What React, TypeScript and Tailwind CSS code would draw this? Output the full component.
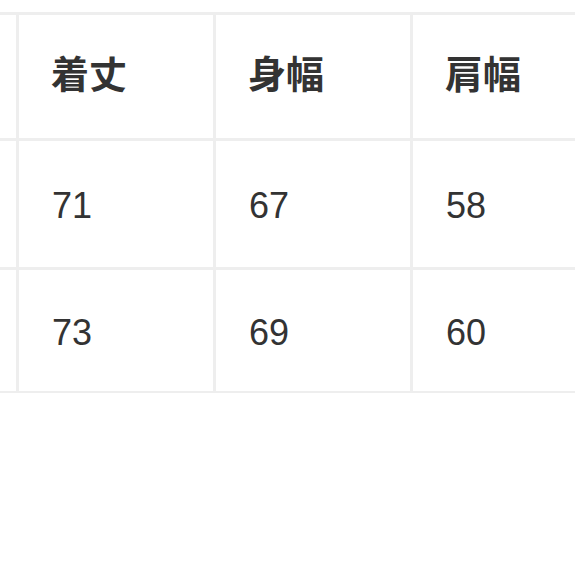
import React from 'react'

const headers = ['着丈', '身幅', '肩幅']
const rows = [
  ['71', '67', '58'],
  ['73', '69', '60'],
]

const Cell = ({ children, head }: { children?: React.ReactNode; head?: boolean }) => (
  <div
    className={
      head
        ? "bg-white flex items-center pl-[32px] pb-[9px] text-[38px] font-bold text-[#333333] font-['Noto_Sans_CJK_JP',sans-serif] leading-none"
        : "bg-white flex items-center pl-[33px] pt-[4px] text-[36px] text-[#333333] font-['Liberation_Sans',Arial,sans-serif] leading-none"
    }
  >
    {children}
  </div>
)

export default function App() {
  return (
    <div className="w-[575px] h-[575px] bg-white overflow-hidden pt-[12px]">
      <div className="grid grid-cols-[16px_194px_194px_1fr] grid-rows-[123px_126px_121px] gap-[3px] pt-[3px] pb-[2px] bg-[#eeeeee]">
        <div className="bg-white" />
        {headers.map((h) => (
          <Cell key={h} head>
            {h}
          </Cell>
        ))}
        {rows.map((r, i) => (
          <React.Fragment key={i}>
            <div className="bg-white" />
            {r.map((v, j) => (
              <Cell key={j}>{v}</Cell>
            ))}
          </React.Fragment>
        ))}
      </div>
    </div>
  )
}
